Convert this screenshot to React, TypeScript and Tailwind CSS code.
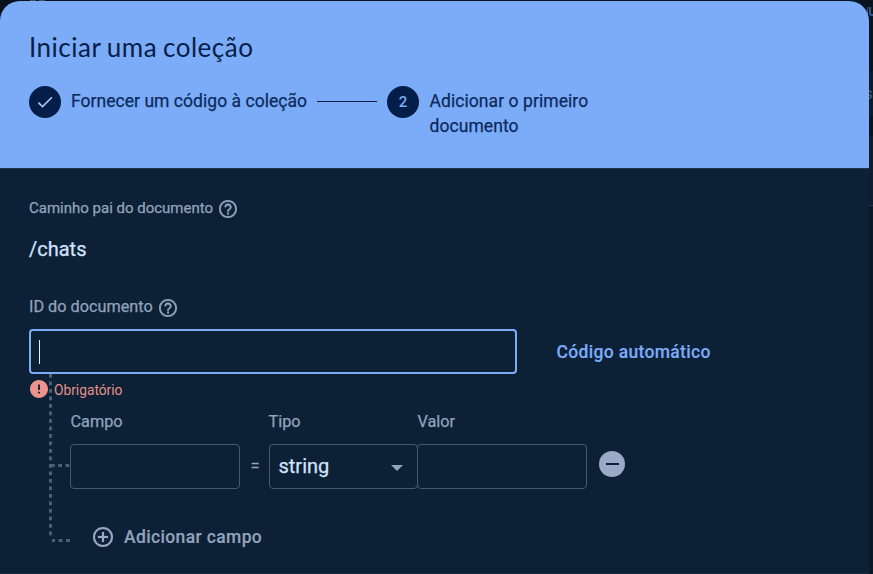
import React from "react";

function HelpIcon() {
  return (
    <svg viewBox="2 2 20 20" className="h-[18px] w-[18px] fill-[#92a3bd] stroke-[#92a3bd] stroke-[0.2]">
      <path d="M11 18h2v-2h-2v2zm1-16C6.48 2 2 6.48 2 12s4.48 10 10 10 10-4.48 10-10S17.52 2 12 2zm0 18c-4.41 0-8-3.59-8-8s3.59-8 8-8 8 3.59 8 8-3.59 8-8 8zm0-14c-2.21 0-4 1.79-4 4h2c0-1.1.9-2 2-2s2 .9 2 2c0 2-3 1.75-3 5h2c0-2.25 3-2.5 3-5 0-2.21-1.79-4-4-4z" />
    </svg>
  );
}

function Header() {
  return (
    <header className="h-[167px] rounded-t-[20px] bg-[#7cacf8] pl-[29px] pt-[29px] text-[#041e49]">
      <h1 className="h-[36px] font-['Lato',sans-serif] text-[26px] leading-[34px] tracking-[0.5px] [word-spacing:-1.2px] whitespace-nowrap">
        Iniciar uma coleção
      </h1>
      <ol className="mt-[19px] flex items-start text-[17.5px] leading-[25px] text-[#0b2a5c]">
        <li className="mt-[1px] flex h-8 w-8 items-center justify-center rounded-full bg-[#041e49]">
          <svg viewBox="0 0 24 24" className="h-5 w-5 fill-[#a8c7fa]">
            <path d="M9 16.17 4.83 12l-1.42 1.41L9 19 21 7l-1.41-1.41z" />
          </svg>
        </li>
        <li className="ml-[10px] mt-1 w-[236px] whitespace-nowrap tracking-[0.04px] [-webkit-text-stroke:0.25px]">Fornecer um código à coleção</li>
        <li className="ml-[10px] mt-4 h-px w-[60px] bg-[#041e49]" />
        <li className="ml-[10px] mt-[1px] flex h-8 w-8 items-center justify-center rounded-full bg-[#041e49] text-[15px] font-medium text-[#7cacf8]">
          2
        </li>
        <li className="ml-[10.5px] mt-1 whitespace-nowrap tracking-[0.07px] [-webkit-text-stroke:0.25px]">
          Adicionar o primeiro
          <br />
          documento
        </li>
      </ol>
    </header>
  );
}

function TreeLines() {
  return (
    <svg
      className="pointer-events-none absolute left-[49px] top-[205px] h-[170px] w-[22px]"
      viewBox="0 0 22 170"
      fill="none"
      stroke="#4c5e76"
      strokeWidth="3"
    >
      <path d="M1.5 0V162" strokeDasharray="3.75 3.75" />
      <path d="M2 91.5H21" strokeDasharray="3.75 3.5" />
      <path d="M3 166.5H21" strokeDasharray="3 3.5 4 3.5 4" />
    </svg>
  );
}

function FieldRow() {
  return (
    <div className="mt-[12px] flex h-[45px] items-center pl-[41px]">
      <div className="h-[45px] w-[170px] rounded-[4px] border border-[#465873]" />
      <span className="w-[29px] pl-[1px] text-center text-[17.5px] text-[#92a3bd]">=</span>
      <div className="flex h-[45px] w-[149px] items-center justify-between rounded-[4px] border border-[#465873] pl-[8.5px] pr-[14px]">
        <span className="mb-px text-[20px] text-[#d3e3fd] [-webkit-text-stroke:0.25px]">string</span>
        <span className="mt-[2px] border-x-[6px] border-t-[6px] border-x-transparent border-t-[#92a3bd]" />
      </div>
      <div className="-ml-px h-[45px] w-[170px] rounded-[4px] border border-[#465873]" />
      <button className="mb-[5px] ml-3 flex h-[26px] w-[26px] items-center justify-center rounded-full bg-[#9aa9c5]">
        <span className="h-[2px] w-[13px] bg-[#0c2136]" />
      </button>
    </div>
  );
}

export default function App() {
  return (
    <div className="relative h-[574px] w-[873px] overflow-hidden bg-[#07141f] font-['Roboto',sans-serif]">
      <div className="absolute left-[30px] top-0 flex gap-[3px]">
        <i className="h-px w-[6px] bg-[#3b5070]" />
        <i className="h-px w-[6px] bg-[#3b5070]" />
      </div>
      <div className="absolute right-0 top-0 h-full w-[10px] overflow-hidden">
        <div className="mt-[71px] h-[45px] bg-[#0d1a2b]" />
        <div className="mt-5 h-[70px] border-b border-[#2b3648] bg-[#111d2c]" />
        <div className="h-[368px] bg-[#0b1826]" />
        <span className="absolute left-[4px] top-[7px] h-[9px] w-px bg-[#40577c]" />
        <span className="absolute left-[6px] top-[7px] h-[9px] w-6 rounded-bl-[3px] border-b-2 border-l-2 border-[#345a94]" />
        <span className="absolute left-[1px] top-[83px] text-[17px] leading-5 text-[#4a5a7c]">s</span>
      </div>

      <main className="relative mt-px w-[869px]">
        <Header />
        <section className="relative h-[405px] border-t border-[#1d344d] bg-[#0c2136] pl-[29px] pt-[29px] text-[#92a3bd]">
          <TreeLines />
          <div className="flex h-5 items-center gap-[6px] text-[15px] leading-5">
            <span className="w-[184px] whitespace-nowrap [-webkit-text-stroke:0.25px]">Caminho pai do documento</span>
            <span className="mt-[1px]"><HelpIcon /></span>
          </div>
          <p className="mt-[18px] h-[26px] text-[20px] leading-[26px] text-[#d3e3fd] [-webkit-text-stroke:0.25px]">/chats</p>
          <div className="mt-[35px] flex h-5 items-center gap-[6px] text-[16.25px] leading-5">
            <span className="w-[124px] whitespace-nowrap [-webkit-text-stroke:0.25px]">ID do documento</span>
            <span className="mt-[1px]"><HelpIcon /></span>
          </div>

          <div className="mt-[12px] flex h-[45px] items-center">
            <div className="flex h-[45px] w-[488px] items-center rounded-[4px] border-2 border-[#7cacf8] pl-2">
              <i className="h-6 w-px bg-[#e5eefc]" />
            </div>
            <a className="ml-[39.5px] mt-[2px] whitespace-nowrap text-[17.5px] font-medium tracking-[0.33px] text-[#7cacf8] [-webkit-text-stroke:0.15px]">
              Código automático
            </a>
          </div>

          <div className="mt-[6px] flex h-5 items-center text-[13.75px] text-[#e58f8b]">
            <svg viewBox="2 2 20 20" className="ml-[1px] mt-[-3px] h-[18px] w-[18px] fill-[#ee928e]">
              <path d="M12 2C6.48 2 2 6.48 2 12s4.48 10 10 10 10-4.48 10-10S17.52 2 12 2zm1 15h-2v-2h2v2zm0-4h-2V7h2v6z" />
            </svg>
            <span className="ml-[6px] mt-[1px]">Obrigatório</span>
          </div>

          <div className="mt-[12px] flex h-5 pl-[41.5px] text-[16.25px] leading-5 [-webkit-text-stroke:0.25px]">
            <span className="w-[198px]">Campo</span>
            <span className="w-[149px]">Tipo</span>
            <span>Valor</span>
          </div>
          <FieldRow />

          <button className="ml-[64px] mt-[36px] flex h-6 items-center text-[17.5px] font-medium tracking-[0.36px]">
            <svg viewBox="2 2 20 20" className="mt-[-1px] h-5 w-5 fill-[#9aa9c5] stroke-[#9aa9c5] stroke-[0.2]">
              <path d="M13 7h-2v4H7v2h4v4h2v-4h4v-2h-4V7zm-1-5C6.48 2 2 6.48 2 12s4.48 10 10 10 10-4.48 10-10S17.52 2 12 2zm0 18c-4.41 0-8-3.59-8-8s3.59-8 8-8 8 3.59 8 8-3.59 8-8 8z" />
            </svg>
            <span className="ml-[11px] [-webkit-text-stroke:0.15px]">Adicionar campo</span>
          </button>
        </section>
        <div className="h-px bg-[#1d2c45]" />
      </main>
    </div>
  );
}
